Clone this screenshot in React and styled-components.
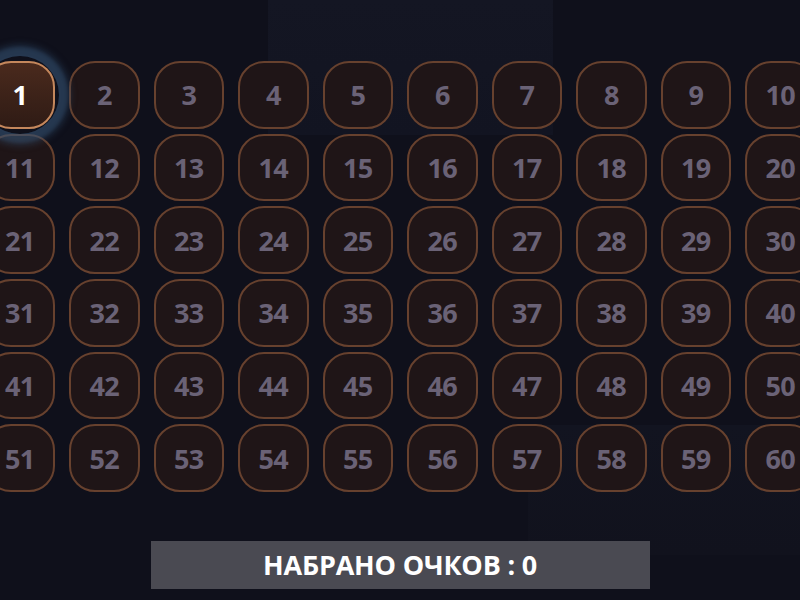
import React from 'react'
import styled, { createGlobalStyle } from 'styled-components'

const GlobalStyle = createGlobalStyle`
    html, body {
        margin: 0;
        padding: 0;
        background: #0f101b;
    }
    body {
        font-family: "Open Sans", "Noto Sans", sans-serif;
        overflow: hidden;
    }
`

const Screen = styled.div`
    width: 800px;
    height: 600px;
    display: flex;
    flex-direction: column;
    align-items: center;
    overflow: hidden;
    background:
        linear-gradient(#141623, #121421) 268px 0 / 285px 135px no-repeat,
        linear-gradient(#13141f, #12131e) 610px 100px / 18px 115px no-repeat,
        linear-gradient(#121420, #11121d) 528px 425px / 272px 130px no-repeat,
        #0f101b;
`

const Board = styled.div`
    margin-top: 61px;
    width: 800px;
    display: flex;
    justify-content: center;
`

const Grid = styled.div`
    flex: none;
    display: grid;
    grid-template-columns: repeat(10, 70.5px);
    grid-auto-rows: 67.5px;
    column-gap: 14px;
    row-gap: 5.2px;
`

const Cell = styled.div`
    position: relative;
    box-sizing: border-box;
    display: flex;
    align-items: center;
    justify-content: center;
    border-radius: 26px;
    border: 2px solid ${p => (p.$active ? '#c4875c' : '#67412e')};
    background: ${p => (p.$active ? 'linear-gradient(#4a2a1d, #2f1b15)' : '#1f1517')};
    color: ${p => (p.$active ? '#ffffff' : '#6a6276')};
    font-size: 27px;
    font-weight: 700;
    letter-spacing: -0.8px;
    z-index: ${p => (p.$active ? 1 : 0)};

    /* halo round the chosen cell */
    &::before {
        content: ${p => (p.$active ? '""' : 'none')};
        position: absolute;
        left: 50%;
        top: 50%;
        width: 78px;
        height: 78px;
        margin: -39px 0 0 -39px;
        border-radius: 50%;
        z-index: -1;
        box-shadow: 0 0 7px 11px rgba(50, 80, 112, 0.5), 0 0 3px 9px rgba(80, 112, 148, 0.18);
    }
`

const ScoreBar = styled.div`
    margin-top: 49px;
    width: 499px;
    height: 48px;
    background: #4a4a52;
    color: #ffffff;
    display: flex;
    align-items: center;
    justify-content: center;
    font-size: 27px;
    font-weight: 700;
    letter-spacing: -0.2px;
`

const App = () => {
    const cells = Array.from({ length: 60 }, (_, i) => i + 1)
    return (
        <>
            <GlobalStyle />
            <Screen>
                <Board>
                    <Grid>
                        {cells.map(n => (
                            <Cell key={n} $active={n === 1}>{n}</Cell>
                        ))}
                    </Grid>
                </Board>
                <ScoreBar>НАБРАНО ОЧКОВ : 0</ScoreBar>
            </Screen>
        </>
    )
}

export default App
